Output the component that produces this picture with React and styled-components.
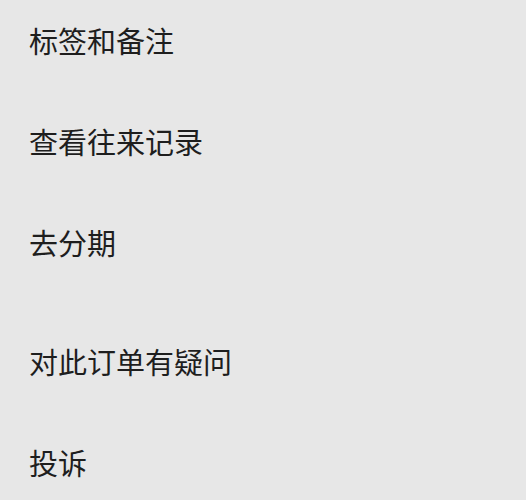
import React from "react";
import styled, { createGlobalStyle } from "styled-components";

const GlobalStyle = createGlobalStyle`
  html, body {
    margin: 0;
    padding: 0;
    background: #e7e7e7;
    overflow: hidden;
  }
  body {
    font-family: "Noto Sans CJK SC", "Noto Sans", sans-serif;
  }
`;

const Page = styled.div`
  width: 526px;
  height: 500px;
  background: #e7e7e7;
  overflow: hidden;
`;

const Menu = styled.div`
  display: flex;
  flex-direction: column;
  gap: 18px;
  margin-top: -10px;
`;

const Group = styled.div`
  display: flex;
  flex-direction: column;
`;

const Item = styled.div`
  height: 101px;
  display: flex;
  align-items: center;
  padding-left: 29px;
  font-size: 29px;
  color: #1e1e1e;
  line-height: 1;
  cursor: pointer;
`;

const groups = [
  ["标签和备注", "查看往来记录", "去分期"],
  ["对此订单有疑问", "投诉"],
];

export default function App() {
  return (
    <Page>
      <GlobalStyle />
      <Menu>
        {groups.map((items, i) => (
          <Group key={i}>
            {items.map((label) => (
              <Item key={label}>{label}</Item>
            ))}
          </Group>
        ))}
      </Menu>
    </Page>
  );
}
